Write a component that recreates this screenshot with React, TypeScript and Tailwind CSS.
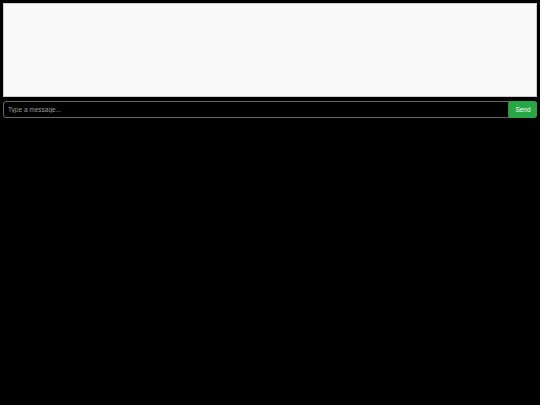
import { useState } from 'react';

export default function App() {
  const [message, setMessage] = useState('');

  return (
    <div className="min-h-screen bg-black p-[3px]" style={{ fontFamily: '"Liberation Sans", Arial, sans-serif' }}>
      <div className="h-[94px] w-full border border-[#cccccc] bg-[#f9f9f9]" />
      <div className="mt-[4px] flex h-[17px]">
        <input
          type="text"
          value={message}
          onChange={(e) => setMessage(e.target.value)}
          placeholder="Type a message..."
          className="h-full flex-1 rounded-l-[3px] border border-[#666666] bg-black px-[4px] text-[6.5px] text-white outline-none placeholder:text-[#9a9a9a]"
        />
        <button
          type="button"
          className="h-full w-[28px] rounded-r-[3px] bg-[#28a745] text-[6.5px] text-white"
        >
          Send
        </button>
      </div>
    </div>
  );
}
